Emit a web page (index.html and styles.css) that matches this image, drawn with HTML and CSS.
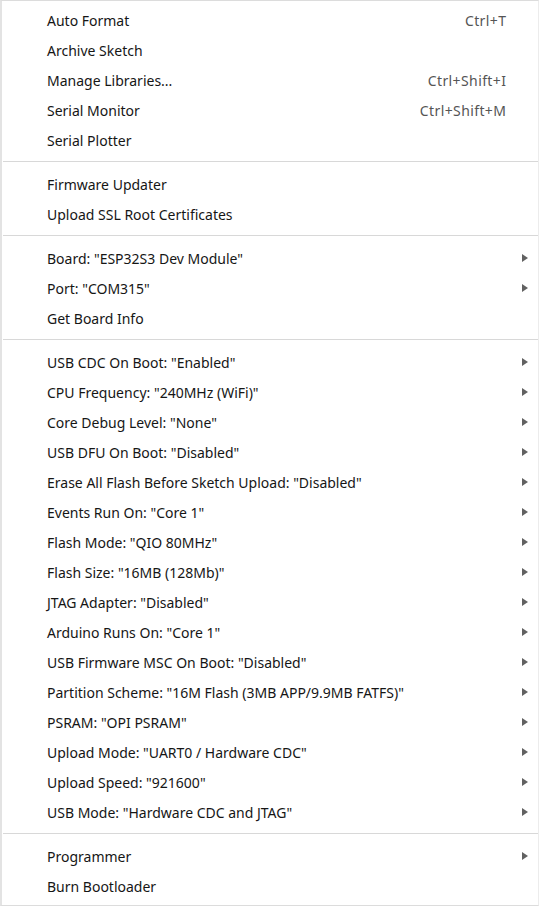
FILE: index.html
```html
<!DOCTYPE html>
<html>
<head>
<meta charset="utf-8">
<link rel="stylesheet" href="styles.css">
</head>
<body>
<div class="menu">
  <div class="group">
    <div class="item"><span class="label">Auto Format</span><span class="key">Ctrl+T</span><span class="sub"></span></div>
    <div class="item"><span class="label">Archive Sketch</span><span class="key"></span><span class="sub"></span></div>
    <div class="item"><span class="label">Manage Libraries...</span><span class="key">Ctrl+Shift+I</span><span class="sub"></span></div>
    <div class="item"><span class="label">Serial Monitor</span><span class="key">Ctrl+Shift+M</span><span class="sub"></span></div>
    <div class="item"><span class="label">Serial Plotter</span><span class="key"></span><span class="sub"></span></div>
  </div>
  <div class="sep"></div>
  <div class="group">
    <div class="item"><span class="label">Firmware Updater</span><span class="key"></span><span class="sub"></span></div>
    <div class="item"><span class="label">Upload SSL Root Certificates</span><span class="key"></span><span class="sub"></span></div>
  </div>
  <div class="sep"></div>
  <div class="group">
    <div class="item"><span class="label">Board: "ESP32S3 Dev Module"</span><span class="key"></span><span class="sub"><i class="arrow"></i></span></div>
    <div class="item"><span class="label">Port: "COM315"</span><span class="key"></span><span class="sub"><i class="arrow"></i></span></div>
    <div class="item"><span class="label">Get Board Info</span><span class="key"></span><span class="sub"></span></div>
  </div>
  <div class="sep"></div>
  <div class="group">
    <div class="item"><span class="label">USB CDC On Boot: "Enabled"</span><span class="key"></span><span class="sub"><i class="arrow"></i></span></div>
    <div class="item"><span class="label">CPU Frequency: "240MHz (WiFi)"</span><span class="key"></span><span class="sub"><i class="arrow"></i></span></div>
    <div class="item"><span class="label">Core Debug Level: "None"</span><span class="key"></span><span class="sub"><i class="arrow"></i></span></div>
    <div class="item"><span class="label">USB DFU On Boot: "Disabled"</span><span class="key"></span><span class="sub"><i class="arrow"></i></span></div>
    <div class="item"><span class="label">Erase All Flash Before Sketch Upload: "Disabled"</span><span class="key"></span><span class="sub"><i class="arrow"></i></span></div>
    <div class="item"><span class="label">Events Run On: "Core 1"</span><span class="key"></span><span class="sub"><i class="arrow"></i></span></div>
    <div class="item"><span class="label">Flash Mode: "QIO 80MHz"</span><span class="key"></span><span class="sub"><i class="arrow"></i></span></div>
    <div class="item"><span class="label">Flash Size: "16MB (128Mb)"</span><span class="key"></span><span class="sub"><i class="arrow"></i></span></div>
    <div class="item"><span class="label">JTAG Adapter: "Disabled"</span><span class="key"></span><span class="sub"><i class="arrow"></i></span></div>
    <div class="item"><span class="label">Arduino Runs On: "Core 1"</span><span class="key"></span><span class="sub"><i class="arrow"></i></span></div>
    <div class="item"><span class="label">USB Firmware MSC On Boot: "Disabled"</span><span class="key"></span><span class="sub"><i class="arrow"></i></span></div>
    <div class="item"><span class="label">Partition Scheme: "16M Flash (3MB APP/9.9MB FATFS)"</span><span class="key"></span><span class="sub"><i class="arrow"></i></span></div>
    <div class="item"><span class="label">PSRAM: "OPI PSRAM"</span><span class="key"></span><span class="sub"><i class="arrow"></i></span></div>
    <div class="item"><span class="label">Upload Mode: "UART0 / Hardware CDC"</span><span class="key"></span><span class="sub"><i class="arrow"></i></span></div>
    <div class="item"><span class="label">Upload Speed: "921600"</span><span class="key"></span><span class="sub"><i class="arrow"></i></span></div>
    <div class="item"><span class="label">USB Mode: "Hardware CDC and JTAG"</span><span class="key"></span><span class="sub"><i class="arrow"></i></span></div>
  </div>
  <div class="sep"></div>
  <div class="group">
    <div class="item"><span class="label">Programmer</span><span class="key"></span><span class="sub"><i class="arrow"></i></span></div>
    <div class="item"><span class="label">Burn Bootloader</span><span class="key"></span><span class="sub"></span></div>
  </div>
</div>
</body>
</html>
```

FILE: styles.css
```css
html, body {
  margin: 0;
  padding: 0;
  background: #ffffff;
}
.menu {
  box-sizing: border-box;
  width: 539px;
  height: 906px;
  border-top: 1px solid #dcdcdc;
  border-left: 2px solid #e3e3e3;
  border-right: 1px solid #ececec;
  border-bottom: 1px solid #dcdcdc;
  padding-top: 4px;
  font-family: "Noto Sans", "Open Sans", sans-serif;
  font-size: 14px;
  color: #161616;
  display: flex;
  flex-direction: column;
}
.item {
  box-sizing: border-box;
  height: 30px;
  display: grid;
  grid-template-columns: 1fr auto 32px;
  align-items: center;
  padding-left: 45px;
}
.label {
  white-space: nowrap;
}
.key {
  color: #555555;
  white-space: nowrap;
  letter-spacing: 0.4px;
  margin-right: -0.4px;
}
.sub {
  display: flex;
  align-items: center;
  padding-left: 16px;
}
.arrow {
  display: block;
  width: 0;
  height: 0;
  border-top: 4.5px solid transparent;
  border-bottom: 4.5px solid transparent;
  border-left: 6px solid #616161;
}
.sep {
  height: 1px;
  background: #d8d8d8;
  margin: 6px 0 7px 1px;
}
```
